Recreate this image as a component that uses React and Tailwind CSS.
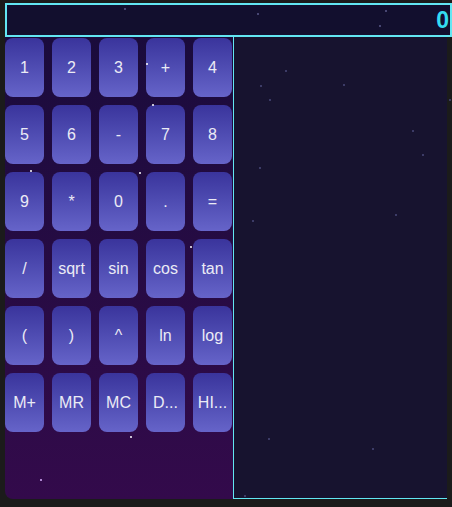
const keys = [
    '1', '2', '3', '+', '4',
    '5', '6', '-', '7', '8',
    '9', '*', '0', '.', '=',
    '/', 'sqrt', 'sin', 'cos', 'tan',
    '(', ')', '^', 'ln', 'log',
    'M+', 'MR', 'MC', 'D...', 'HI...',
];

const stars = [
    { x: 124, y: 8, c: 'bg-[#5a5a8a]' },
    { x: 257, y: 13, c: 'bg-[#5a5a8a]' },
    { x: 385, y: 10, c: 'bg-[#5a5a8a]' },
    { x: 379, y: 25, c: 'bg-[#5a5a8a]' },
    { x: 146, y: 63, c: 'bg-white' },
    { x: 152, y: 104, c: 'bg-white' },
    { x: 30, y: 170, c: 'bg-white' },
    { x: 139, y: 172, c: 'bg-white' },
    { x: 190, y: 246, c: 'bg-white' },
    { x: 130, y: 436, c: 'bg-white' },
    { x: 40, y: 479, c: 'bg-[#d8b0ff]' },
    { x: 285, y: 70, c: 'bg-[#4a4a7a]' },
    { x: 260, y: 85, c: 'bg-[#4a4a7a]' },
    { x: 269, y: 99, c: 'bg-[#4a4a7a]' },
    { x: 343, y: 84, c: 'bg-[#4a4a7a]' },
    { x: 449, y: 99, c: 'bg-[#4a4a7a]' },
    { x: 412, y: 130, c: 'bg-[#4a4a7a]' },
    { x: 422, y: 154, c: 'bg-[#4a4a7a]' },
    { x: 259, y: 167, c: 'bg-[#4a4a7a]' },
    { x: 395, y: 214, c: 'bg-[#4a4a7a]' },
    { x: 252, y: 220, c: 'bg-[#4a4a7a]' },
    { x: 268, y: 438, c: 'bg-[#4a4a7a]' },
    { x: 372, y: 448, c: 'bg-[#4a4a7a]' },
    { x: 244, y: 495, c: 'bg-[#4a4a7a]' },
];

const Key = ({ label }) => (
    <button className="w-[39px] h-[59px] rounded-lg bg-gradient-to-b from-[#3a349c] to-[#6664c9] text-[#ebebf5] text-[16px] flex items-center justify-center">
        {label}
    </button>
);

const App = () => {
    return (
        <div className="relative w-[452px] h-[507px] bg-[#1b1b1b] overflow-hidden font-['Liberation_Sans',Arial,sans-serif]">
            <div className="ml-[5px] mt-[3px] h-[34px] border-2 border-[#62e6f2] bg-[#120f2e] flex items-center justify-end pr-[1px]">
                <span className="text-[#34dcf0] text-[23px] font-bold leading-none">0</span>
            </div>
            <div className="flex ml-[5px] mr-[5px]">
                <div className="w-[228px] h-[462px] pt-[1px] rounded-bl-lg bg-gradient-to-b from-[#1a0b3c] to-[#330a4b]">
                    <div className="grid grid-cols-[repeat(5,39px)] gap-x-2 gap-y-2">
                        {keys.map((k) => (
                            <Key key={k} label={k} />
                        ))}
                    </div>
                </div>
                <div className="flex-1 h-[462px] border-l border-b border-[#62e6f2] bg-[#17132f]" />
            </div>
            {stars.map((s, i) => (
                <span
                    key={i}
                    className={`absolute w-[2px] h-[2px] rounded-full ${s.c}`}
                    style={{ left: s.x, top: s.y }}
                />
            ))}
        </div>
    );
};

export default App;
